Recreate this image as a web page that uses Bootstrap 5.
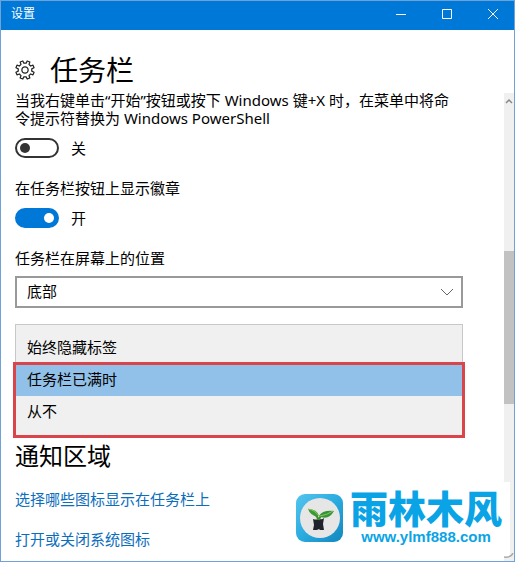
<!DOCTYPE html>
<html lang="zh-CN">
<head>
<meta charset="utf-8">
<meta name="viewport" content="width=device-width, initial-scale=1">
<title>设置</title>
<link rel="stylesheet" href="https://cdn.jsdelivr.net/npm/bootstrap@5.3.0/dist/css/bootstrap.min.css">
<style>
  body { font-family: "Noto Sans", "Noto Sans CJK SC", sans-serif; font-size: 15px; line-height: 18px; color: #000; background: #fff; }
  .app-window { border: 1px solid #6fa3d8; }
  .title-bar { background: #0078d7; color: #fff; height: 29px; padding: 0 0 3px 10px; font-size: 12px; }
  .win-btn { width: 46px; height: 26px; color: #fff; background: none; border: 0; padding: 0 0 0 4px; }
  .win-btn svg { display: block; margin: 0 auto; }
  .page-head { height: 61px; padding: 18px 14px 0; gap: 15px; }
  .page-head h1 { font-size: 28px; line-height: 40px; font-weight: 400; }
  .settings { padding: 0 41px 12px 14px; }
  .setting { margin-bottom: 21px; }
  .form-switch.toggle { padding: 0; min-height: 20px; margin: 11px 0 0; gap: 12px; }
  .form-switch.toggle .form-check-input {
    width: 44px; height: 20px; margin: 0; border: 2px solid #333; background-color: #fff; background-size: 16px 16px;
    background-image: url("data:image/svg+xml,%3Csvg xmlns='http://www.w3.org/2000/svg' viewBox='0 0 16 16'%3E%3Ccircle cx='8' cy='8' r='5' fill='%23333'/%3E%3C/svg%3E");
  }
  .form-switch.toggle .form-check-input:checked {
    border-color: #0078d7; background-color: #0078d7;
    background-image: url("data:image/svg+xml,%3Csvg xmlns='http://www.w3.org/2000/svg' viewBox='0 0 16 16'%3E%3Ccircle cx='8' cy='8' r='5' fill='white'/%3E%3C/svg%3E");
  }
  .place-select.form-select {
    height: 32px; margin-top: 9px; padding: 0 32px 2px 10px; font-size: 15px; line-height: 26px; color: #000;
    border: 2px solid #999; border-radius: 0; background-size: 14px 14px; background-position: right 7px center;
    background-image: url("data:image/svg+xml,%3Csvg xmlns='http://www.w3.org/2000/svg' viewBox='0 0 14 14' fill='none' stroke='%23666'%3E%3Cpath d='M1 4l6 6 6-6'/%3E%3C/svg%3E");
  }
  .options { margin-top: 16px; padding: 7px 0; background: #f0f0f0; border: 1px solid #c8c8c8; }
  .options .option { height: 32px; padding: 0 11px 2px; border: 0; background: none; color: #000; text-align: left; }
  .options .option.chosen { background: #91c0e8; }
  .callout-frame { left: -3px; right: -3px; top: 37px; bottom: -3px; border: 3px solid #d9454b; pointer-events: none; }
  .section-title { font-size: 24px; line-height: 30px; font-weight: 400; margin: 5px 0 19px; }
  .more-links { gap: 22px; }
  .more-links a { color: #0a6ebd; text-decoration: none; }
  .scroll-track { width: 10px; margin-top: 2px; background: #f0f0f0; }
  .track-btn { height: 15px; padding: 0; border: 0; background: none; }
  .before-thumb { flex: 143 0 0; }
  .thumb { flex: 153 0 0; background: #c2c2c2; }
  .after-thumb { flex: 157 0 0; }
  .watermark { right: 4px; bottom: 3px; width: 222px; height: 76px; background: #fff; padding: 5px 8px 0; gap: 6px; }
  .app-mark { margin-top: 6px; }
  .page-curl { right: -4px; bottom: -1px; }
  .brand-name { font-family: "Noto Sans CJK SC", sans-serif; font-weight: 900; font-size: 38px; line-height: 40px; color: #0aa4e6; white-space: nowrap; }
  .brand-url { font-family: "Liberation Sans", sans-serif; font-weight: 700; font-size: 15px; line-height: 20px; color: #0aa4e6; text-decoration: none; }
</style>
<script src="https://cdn.jsdelivr.net/npm/bootstrap@5.3.0/dist/js/bootstrap.bundle.min.js"></script>
</head>
<body>
<div class="app-window position-relative d-flex flex-column min-vh-100">
  <header class="title-bar d-flex align-items-center justify-content-between">
    <span>设置</span>
    <div class="d-flex">
      <button class="win-btn" type="button" aria-label="最小化"><svg width="12" height="12" stroke="currentColor" fill="none"><path d="M1 6.500h10"/></svg></button>
      <button class="win-btn" type="button" aria-label="最大化"><svg width="12" height="12" stroke="currentColor" fill="none"><path d="M1.500 1.500h9v9h-9z"/></svg></button>
      <button class="win-btn" type="button" aria-label="关闭"><svg width="12" height="12" stroke="currentColor" fill="none"><path d="M1 1l10 10M11 1L1 11"/></svg></button>
    </div>
  </header>
  <div class="page-head d-flex align-items-center">
    <svg width="20" height="20" viewBox="-10.500 -10.500 21 21" fill="none" stroke="#222" stroke-width="1.300" stroke-linejoin="round" aria-hidden="true">
      <path d="M1.200-7.100L2.300-9.500 5.100-8.400 4.200-5.900 5.900-4.200 8.400-5.100 9.500-2.300 7.100-1.200 7.100 1.200 9.500 2.300 8.400 5.100 5.900 4.200 4.200 5.900 5.100 8.400 2.300 9.500 1.200 7.100-1.200 7.100-2.300 9.500-5.100 8.400-4.200 5.900-5.900 4.200-8.400 5.100-9.500 2.300-7.100 1.200-7.100-1.200-9.500-2.300-8.400-5.100-5.900-4.200-4.200-5.900-5.100-8.400-2.300-9.500-1.200-7.100z"/>
      <circle r="3.300"/>
    </svg>
    <h1 class="mb-0">任务栏</h1>
  </div>
  <div class="d-flex flex-grow-1">
    <main class="settings flex-grow-1">
      <div class="setting">
        <label class="d-block" for="powershell">当我右键单击“开始”按钮或按下 Windows 键+X 时，在菜单中将命令提示符替换为 Windows PowerShell</label>
        <div class="form-check form-switch toggle d-flex align-items-center">
          <input class="form-check-input" type="checkbox" role="switch" id="powershell">
          <span>关</span>
        </div>
      </div>
      <div class="setting">
        <label class="d-block" for="badges">在任务栏按钮上显示徽章</label>
        <div class="form-check form-switch toggle d-flex align-items-center">
          <input class="form-check-input" type="checkbox" role="switch" id="badges" checked>
          <span>开</span>
        </div>
      </div>
      <label class="d-block" for="place">任务栏在屏幕上的位置</label>
      <select class="form-select place-select" id="place"><option>底部</option></select>
      <div class="options position-relative d-flex flex-column" role="listbox" aria-label="合并任务栏按钮">
        <button class="option" type="button" role="option">始终隐藏标签</button>
        <button class="option chosen" type="button" role="option" aria-selected="true">任务栏已满时</button>
        <button class="option" type="button" role="option">从不</button>
        <div class="callout-frame position-absolute"></div>
      </div>
      <h2 class="section-title">通知区域</h2>
      <nav class="more-links d-flex flex-column align-items-start">
        <a href="#">选择哪些图标显示在任务栏上</a>
        <a href="#">打开或关闭系统图标</a>
      </nav>
    </main>
    <div class="scroll-track d-flex flex-column flex-shrink-0">
      <button class="track-btn d-flex align-items-center justify-content-center" type="button" aria-label="向上滚动"><svg width="8" height="6" fill="none" stroke="#888" stroke-width="1.500"><path d="M1 5l3-3 3 3"/></svg></button>
      <div class="before-thumb"></div>
      <div class="thumb"></div>
      <div class="after-thumb"></div>
    </div>
  </div>
  <div class="watermark position-absolute d-flex align-items-start">
    <svg class="app-mark flex-shrink-0" width="48" height="50" viewBox="0 0 48 50" aria-hidden="true">
      <defs><linearGradient id="tile" x1="0" y1="0" x2="1" y2="1"><stop offset="0" stop-color="#55c5ee"/><stop offset=".5" stop-color="#2aabe0"/><stop offset="1" stop-color="#1286bd"/></linearGradient></defs>
      <rect y="1" width="47" height="48" rx="9" fill="url(#tile)"/>
      <circle cx="24" cy="25" r="20" fill="#e6e6e6"/>
      <path d="M17 26q3 1 5 0h2q2 1 4-1l-1 6 1 6h-4l-1-1-2 1h-4l1-5z" fill="#20232b"/>
      <path d="M22 27q0-4-4-6M23 27q1-5 6-6" fill="none" stroke="#3e8d2c" stroke-width="2"/>
      <path d="M12 16q9 0 11 7-8 1-11-7z" fill="#3b9936"/>
      <path d="M12 16q7 1 11 7" fill="none" stroke="#8bc95c"/>
      <path d="M23 23q3-6 15-5-5 9-13 6z" fill="#35943a"/>
      <path d="M24 23q7-1 13-5" fill="none" stroke="#8bc95c"/>
    </svg>
    <div class="d-flex flex-column align-items-center">
      <span class="brand-name">雨林木风</span>
      <a class="brand-url" href="#">www.ylmf888.com</a>
    </div>
    <svg class="page-curl position-absolute" width="10" height="6" fill="none" stroke="#aaa" stroke-width="1.500" aria-hidden="true"><path d="M0 4q7 1 9-4"/></svg>
  </div>
</div>
</body>
</html>
